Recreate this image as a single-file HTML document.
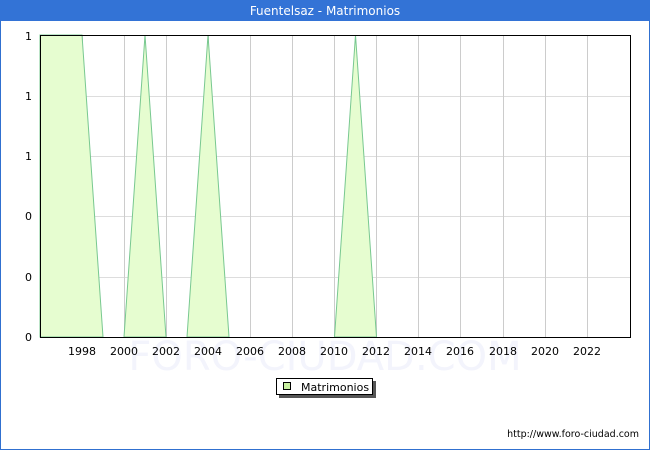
<!DOCTYPE html>
<html><head><meta charset="utf-8"><style>
html,body{margin:0;padding:0;background:#fff;}
svg{display:block;font-family:"DejaVu Sans","Liberation Sans",sans-serif;}
</style></head><body>
<svg width="650" height="450" viewBox="0 0 650 450">
<rect x="0" y="0" width="650" height="450" fill="#fff"/>
<rect x="0.5" y="0.5" width="649" height="449" fill="none" stroke="#3070d0" stroke-width="1"/>
<rect x="0" y="0" width="650" height="21" fill="#3373d6"/>
<text x="325" y="15" fill="#fff" font-size="12" text-anchor="middle">Fuentelsaz - Matrimonios</text>
<text x="325" y="370" fill="#f3f4fc" font-size="40" text-anchor="middle">FORO-CIUDAD.COM</text>
<g stroke="#dddddd" stroke-width="1">
<line x1="40" y1="96.5" x2="630" y2="96.5"/>
<line x1="40" y1="156.5" x2="630" y2="156.5"/>
<line x1="40" y1="216.5" x2="630" y2="216.5"/>
<line x1="40" y1="277.5" x2="630" y2="277.5"/>
</g>
<g stroke="#cccccc" stroke-width="1">
<line x1="82.5" y1="35" x2="82.5" y2="337"/><line x1="124.5" y1="35" x2="124.5" y2="337"/>
<line x1="166.5" y1="35" x2="166.5" y2="337"/><line x1="208.5" y1="35" x2="208.5" y2="337"/>
<line x1="250.5" y1="35" x2="250.5" y2="337"/><line x1="292.5" y1="35" x2="292.5" y2="337"/>
<line x1="334.5" y1="35" x2="334.5" y2="337"/><line x1="376.5" y1="35" x2="376.5" y2="337"/>
<line x1="418.5" y1="35" x2="418.5" y2="337"/><line x1="460.5" y1="35" x2="460.5" y2="337"/>
<line x1="503.5" y1="35" x2="503.5" y2="337"/><line x1="545.5" y1="35" x2="545.5" y2="337"/>
<line x1="587.5" y1="35" x2="587.5" y2="337"/>
</g>
<g fill="#e6fdd0" stroke="#78c890" stroke-width="1">
<polygon points="40,35 82,35 103,337 40,337"/>
<polygon points="124,337 145,35 166,337"/>
<polygon points="187,337 208,35 229,337"/>
<polygon points="334.5,337 355.5,35 376.5,337"/>
</g>
<rect x="40.5" y="35.5" width="590" height="302" fill="none" stroke="#000" stroke-width="1"/>
<g font-size="11" fill="#000" text-anchor="end">
<text x="32" y="40">1</text><text x="32" y="100">1</text><text x="32" y="160">1</text>
<text x="32" y="220">0</text><text x="32" y="281">0</text><text x="32" y="341">0</text>
</g>
<g font-size="11" fill="#000" text-anchor="middle">
<text x="82" y="355">1998</text><text x="124" y="355">2000</text><text x="166" y="355">2002</text>
<text x="208" y="355">2004</text><text x="250" y="355">2006</text><text x="292" y="355">2008</text>
<text x="334" y="355">2010</text><text x="376" y="355">2012</text><text x="418" y="355">2014</text>
<text x="460" y="355">2016</text><text x="503" y="355">2018</text><text x="545" y="355">2020</text>
<text x="587" y="355">2022</text>
</g>
<rect x="279" y="381" width="97" height="17" fill="#555"/>
<rect x="276.5" y="378.5" width="96" height="16" fill="#fff" stroke="#000"/>
<rect x="283.5" y="382.5" width="7" height="7" fill="#c8f0a0" stroke="#000"/>
<text x="301" y="391" font-size="11">Matrimonios</text>
<text x="639" y="437" font-size="9.5" text-anchor="end">http://www.foro-ciudad.com</text>
</svg>
</body></html>
